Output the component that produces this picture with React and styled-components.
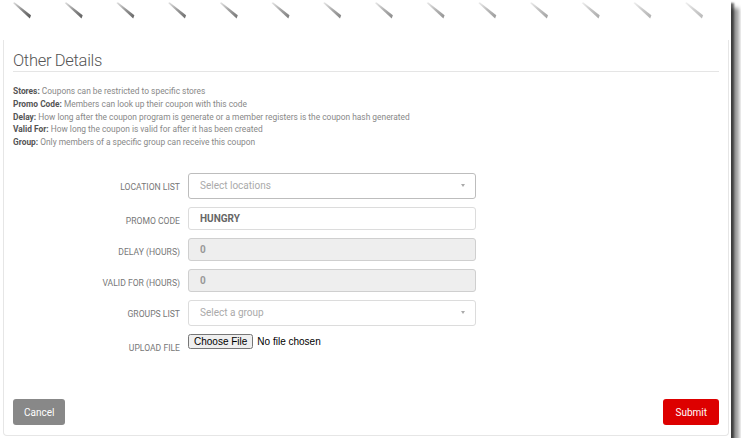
import React from "react";
import styled, { createGlobalStyle } from "styled-components";

const Global = createGlobalStyle`
  html, body { margin: 0; padding: 0; background: #fff; overflow: hidden; }
  body { font-family: Roboto, "Liberation Sans", sans-serif; }
  * { box-sizing: border-box; }
`;

const Paper = styled.div`
  width: 731px;
  height: 438px;
  background: #fff;
  display: flex;
  flex-direction: column;
  box-shadow: 3px 3px 2px rgba(0, 0, 0, 0.6), 8px 8px 4px rgba(0, 0, 0, 0.4);
`;

const TornEdge = styled.div`
  height: 40px;
  flex: none;
  svg { display: block; }
`;

const Card = styled.section`
  flex: 1;
  margin: 0 2px 2px 3px;
  border: 1px solid #e6e6e6;
  border-top: none;
  border-radius: 0 0 4px 4px;
  padding: 11px 9px 10px 9px;
  display: flex;
  flex-direction: column;
`;

const Title = styled.h3`
  margin: 0;
  font-family: Roboto, sans-serif;
  font-weight: 300;
  font-size: 16.5px;
  letter-spacing: -0.3px;
  line-height: 20px;
  color: #555;
  padding-bottom: 0;
  border-bottom: 1px solid #e5e5e5;
`;

const Help = styled.div`
  margin-top: 13px;
  font-size: 8.4px;
  line-height: 12.75px;
  color: #888;
  b { color: #555; font-weight: 700; }
`;

const Form = styled.div`
  margin-top: 24px;
  display: flex;
  flex-direction: column;
  gap: 8px;
`;

const Row = styled.div`
  display: grid;
  grid-template-columns: 167px 288px;
  column-gap: 8px;
  align-items: start;
`;

const Label = styled.label`
  text-align: right;
  font-size: 8.6px;
  line-height: 10px;
  padding-top: 9px;
  color: #777;
  text-transform: uppercase;
`;

const SelectBox = styled.div`
  height: 26px;
  border: 1px solid ${(p) => (p.$strong ? "#bdbdbd" : "#dcdcdc")};
  border-radius: 3px;
  display: flex;
  align-items: center;
  justify-content: space-between;
  padding: 0 10px 0 11px;
  font-size: 10px;
  color: #aaa;
`;

const Caret = styled.span`
  width: 0;
  height: 0;
  border-left: 2.5px solid transparent;
  border-right: 2.5px solid transparent;
  border-top: 3px solid #aaa;
`;

const TextInput = styled.input`
  height: 23px;
  width: 100%;
  border: 1px solid ${(p) => (p.disabled ? "#cfcfcf" : "#dcdcdc")};
  border-radius: 3px;
  background: ${(p) => (p.disabled ? "#eeeeee" : "#fff")};
  padding: 0 11px;
  font-family: Roboto, sans-serif;
  font-size: 10px;
  font-weight: 700;
  color: ${(p) => (p.disabled ? "#999" : "#666")};
  outline: none;
  &:disabled { opacity: 1; }
`;

const FileInput = styled.input`
  font-family: "Liberation Sans", Arial, sans-serif;
  font-size: 10px;
  color: #000;
  height: 15px;
  &::file-selector-button {
    font-family: "Liberation Sans", Arial, sans-serif;
    font-size: 10px;
    height: 15px;
    padding: 0 4px;
    margin-right: 4px;
  }
`;

const Footer = styled.div`
  margin-top: auto;
  display: flex;
  justify-content: space-between;
`;

const Button = styled.button`
  height: 26px;
  padding: 0 ${(p) => (p.$wide ? 12 : 11)}px;
  border: none;
  border-radius: 3px;
  background: ${(p) => p.$bg};
  color: #fff;
  font-family: Roboto, sans-serif;
  font-size: 10px;
  cursor: pointer;
`;

function Slashes() {
  const xs = Array.from({ length: 14 }, (_, i) => 13 + i * 51.7);
  return (
    <svg width="731" height="40" viewBox="0 0 731 40">
      <defs>
        <linearGradient id="sl" x1="0" y1="0" x2="1" y2="1">
          <stop offset="0" stopColor="#e0e0e0" />
          <stop offset="0.5" stopColor="#8a8a8a" />
          <stop offset="1" stopColor="#555" />
        </linearGradient>
      </defs>
      {xs.map((x, i) => (
        <polygon
          key={i}
          points={`${x},3 ${x + 1.5},2.3 ${x + 18},15.3 ${x + 16.8},18.5`}
          fill="url(#sl)"
          opacity={1 - i * 0.045}
        />
      ))}
    </svg>
  );
}

export default function App() {
  return (
    <>
      <Global />
      <Paper>
        <TornEdge>
          <Slashes />
        </TornEdge>
        <Card>
          <Title>Other Details</Title>
          <Help>
            <div><b>Stores:</b> Coupons can be restricted to specific stores</div>
            <div><b>Promo Code:</b> Members can look up their coupon with this code</div>
            <div><b>Delay:</b> How long after the coupon program is generate or a member registers is the coupon hash generated</div>
            <div><b>Valid For:</b> How long the coupon is valid for after it has been created</div>
            <div><b>Group:</b> Only members of a specific group can receive this coupon</div>
          </Help>
          <Form>
            <Row>
              <Label>Location List</Label>
              <SelectBox $strong>
                <span>Select locations</span>
                <Caret />
              </SelectBox>
            </Row>
            <Row>
              <Label>Promo Code</Label>
              <TextInput defaultValue="HUNGRY" />
            </Row>
            <Row>
              <Label>Delay (Hours)</Label>
              <TextInput defaultValue="0" disabled />
            </Row>
            <Row>
              <Label>Valid For (Hours)</Label>
              <TextInput defaultValue="0" disabled />
            </Row>
            <Row>
              <Label>Groups List</Label>
              <SelectBox>
                <span>Select a group</span>
                <Caret />
              </SelectBox>
            </Row>
            <Row>
              <Label>Upload File</Label>
              <FileInput type="file" />
            </Row>
          </Form>
          <Footer>
            <Button $bg="#888888">Cancel</Button>
            <Button $bg="#dd0000" $wide>Submit</Button>
          </Footer>
        </Card>
      </Paper>
    </>
  );
}
